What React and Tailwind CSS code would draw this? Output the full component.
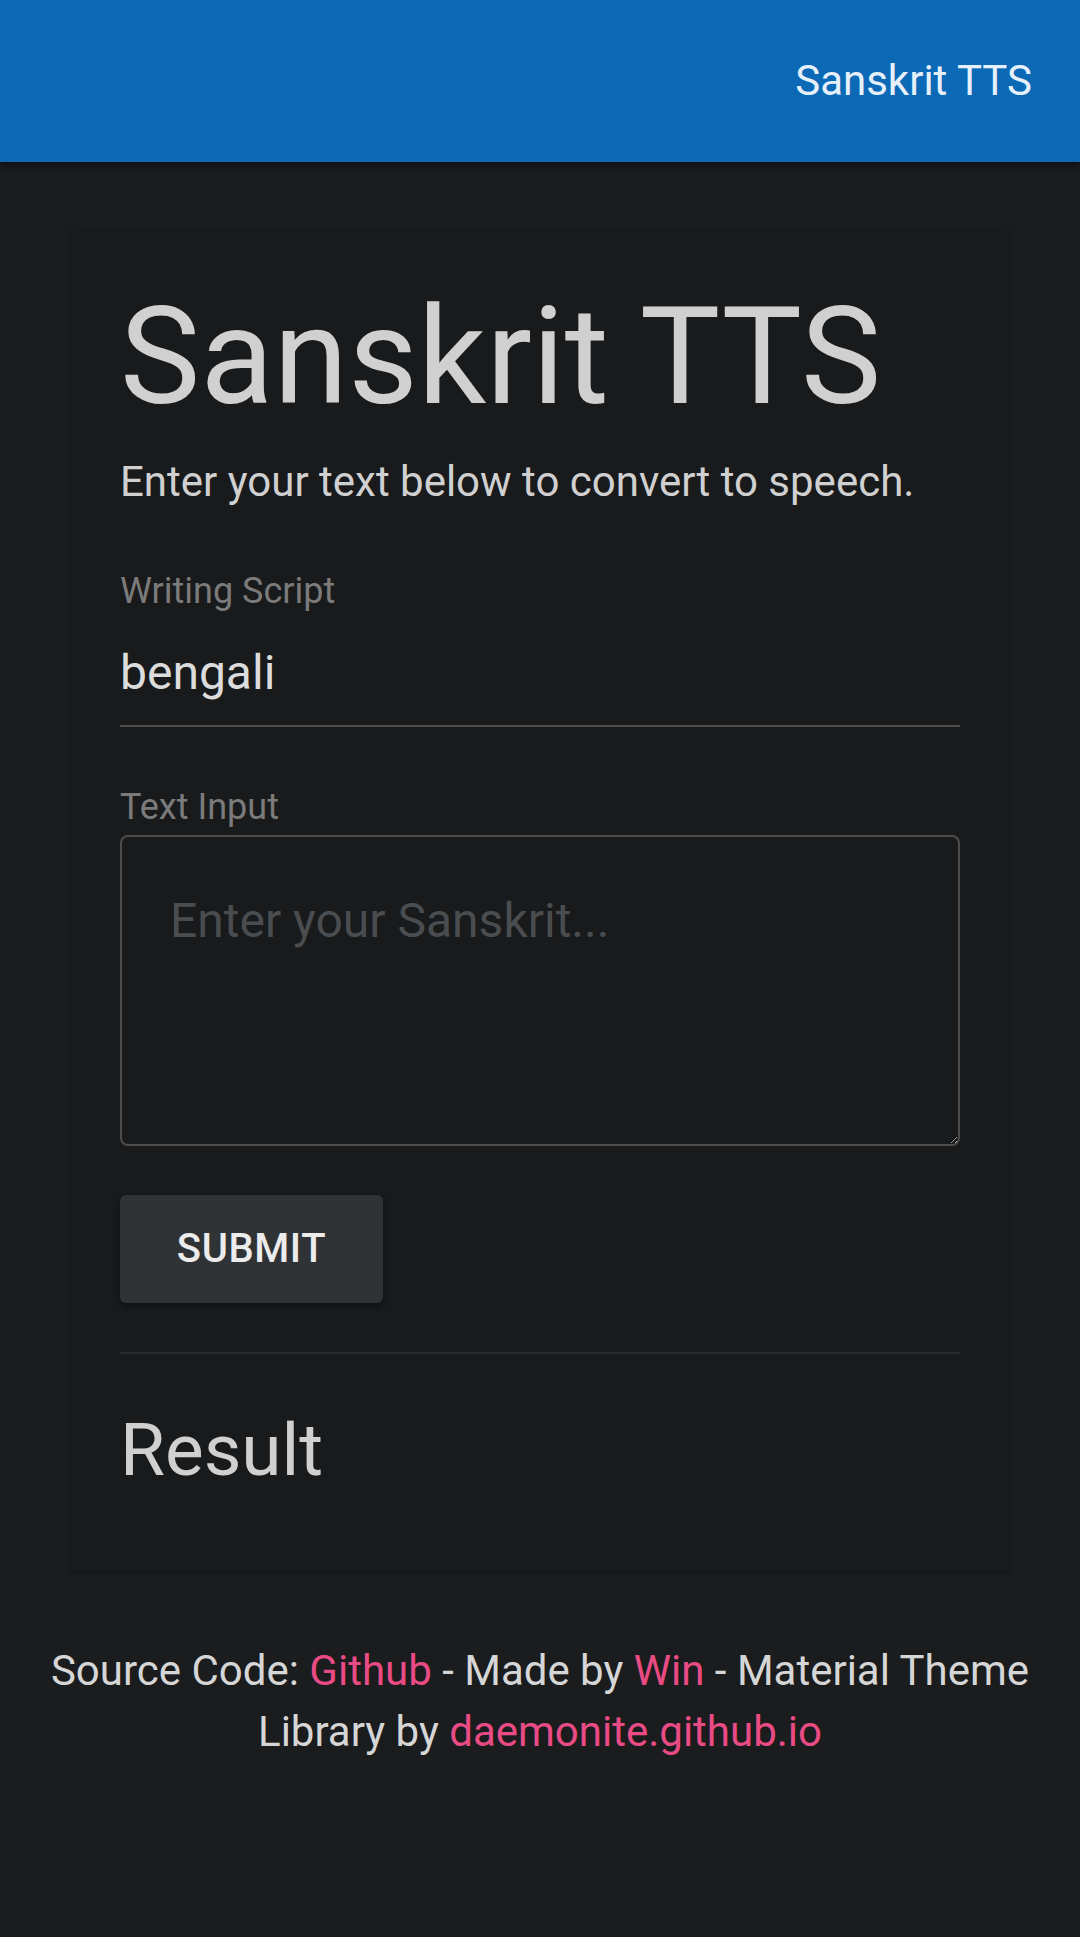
export default function App() {
  return (
    <div className="min-h-[1937px] bg-[#1a1c1e] font-['Roboto',sans-serif] text-[#d2d2d2]">
      {/* Top bar */}
      <nav className="flex h-[162px] items-center justify-end bg-[#0b69b5] pr-[48px] shadow-[0_4px_6px_rgba(0,0,0,0.45)]">
        <span className="text-[42px] leading-none text-[#e6f0fa]">Sanskrit TTS</span>
      </nav>

      {/* Card */}
      <main className="mx-[72px] mt-[68px] bg-[#181a1c] px-[48px] pt-[50px] pb-[76px] shadow-[0_2px_6px_rgba(0,0,0,0.35)]">
        <h1 className="text-[135px] leading-[154px] font-normal text-[#d0d0d0]">Sanskrit TTS</h1>
        <p className="mt-[16px] text-[42px] leading-[63px] text-[#d0d0d0]">
          Enter your text below to convert to speech.
        </p>

        <label className="mt-[52px] block text-[36px] leading-[52px] text-[#7b7b7b]">Writing Script</label>
        <div className="mt-[20px] border-b-2 border-[#4f4d4a] pb-[16px] text-[48px] leading-[72px] text-[#dcdcdc]">
          bengali
        </div>

        <label className="mt-[54px] block text-[36px] leading-[52px] text-[#7b7b7b]">Text Input</label>
        <textarea
          placeholder="Enter your Sanskrit..."
          className="mt-[2px] block h-[311px] w-full rounded-[8px] border-2 border-[#4f4d4a] bg-[#181a1c] p-[48px] text-[48px] leading-[72px] text-[#dcdcdc] outline-none placeholder:text-[#4a4d50]"
        />

        <button
          type="button"
          className="mt-[49px] flex h-[108px] w-[263px] items-center justify-center rounded-[6px] bg-[#303336] text-[40px] font-medium tracking-[0.6px] text-[#ececec] shadow-[0_3px_6px_rgba(0,0,0,0.4)]"
        >
          SUBMIT
        </button>

        <hr className="mt-[49px] border-t-2 border-[#2a2b2c]" />

        <h2 className="mt-[52px] text-[73px] leading-[88px] text-[#d0d0d0]">Result</h2>
      </main>

      {/* Footer */}
      <footer className="mt-[70px] px-[36px] text-center text-[42px] leading-[61px] text-[#d6d6d6]">
        Source Code: <a className="text-[#e94b84]">Github</a> - Made by{' '}
        <a className="text-[#e94b84]">Win</a> - Material Theme Library by{' '}
        <a className="text-[#e94b84]">daemonite.github.io</a>
      </footer>
    </div>
  )
}
